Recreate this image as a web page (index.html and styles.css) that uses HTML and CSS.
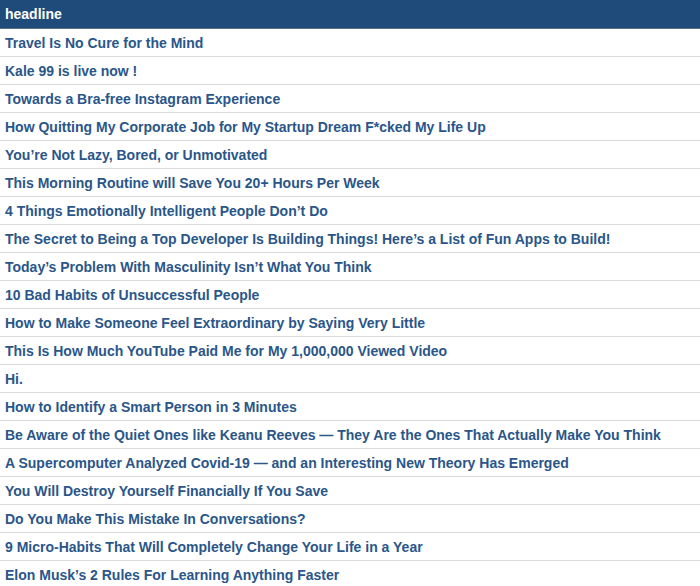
FILE: index.html
```html
<!DOCTYPE html>
<html>
<head>
<meta charset="utf-8">
<link rel="stylesheet" href="styles.css">
</head>
<body>
<table class="grid">
<thead><tr><th>headline</th></tr></thead>
<tbody>
<tr><td>Travel Is No Cure for the Mind</td></tr>
<tr><td>Kale 99 is live now !</td></tr>
<tr><td>Towards a Bra-free Instagram Experience</td></tr>
<tr><td>How Quitting My Corporate Job for My Startup Dream F*cked My Life Up</td></tr>
<tr><td>You’re Not Lazy, Bored, or Unmotivated</td></tr>
<tr><td>This Morning Routine will Save You 20+ Hours Per Week</td></tr>
<tr><td>4 Things Emotionally Intelligent People Don’t Do</td></tr>
<tr><td>The Secret to Being a Top Developer Is Building Things! Here’s a List of Fun Apps to Build!</td></tr>
<tr><td>Today’s Problem With Masculinity Isn’t What You Think</td></tr>
<tr><td>10 Bad Habits of Unsuccessful People</td></tr>
<tr><td>How to Make Someone Feel Extraordinary by Saying Very Little</td></tr>
<tr><td>This Is How Much YouTube Paid Me for My 1,000,000 Viewed Video</td></tr>
<tr><td>Hi.</td></tr>
<tr><td>How to Identify a Smart Person in 3 Minutes</td></tr>
<tr><td>Be Aware of the Quiet Ones like Keanu Reeves — They Are the Ones That Actually Make You Think</td></tr>
<tr><td>A Supercomputer Analyzed Covid-19 — and an Interesting New Theory Has Emerged</td></tr>
<tr><td>You Will Destroy Yourself Financially If You Save</td></tr>
<tr><td>Do You Make This Mistake In Conversations?</td></tr>
<tr><td>9 Micro-Habits That Will Completely Change Your Life in a Year</td></tr>
<tr><td>Elon Musk’s 2 Rules For Learning Anything Faster</td></tr>
</tbody>
</table>
</body>
</html>
```
FILE: styles.css
```css
html, body {
  margin: 0;
  padding: 0;
  background: #ffffff;
}
.grid {
  width: 100%;
  border-collapse: collapse;
  font-family: "Liberation Sans", Arial, sans-serif;
  font-size: 14px;
  font-weight: bold;
}
.grid th {
  height: 28px;
  padding: 0 5px;
  text-align: left;
  background: #1f4b7a;
  color: #ffffff;
  border-bottom: 1px solid #5a6f86;
  box-sizing: border-box;
}
.grid td {
  height: 28px;
  padding: 1px 5px 0;
  color: #2a5689;
  border-bottom: 1px solid #dcdcdc;
  box-sizing: border-box;
  white-space: nowrap;
}
```
